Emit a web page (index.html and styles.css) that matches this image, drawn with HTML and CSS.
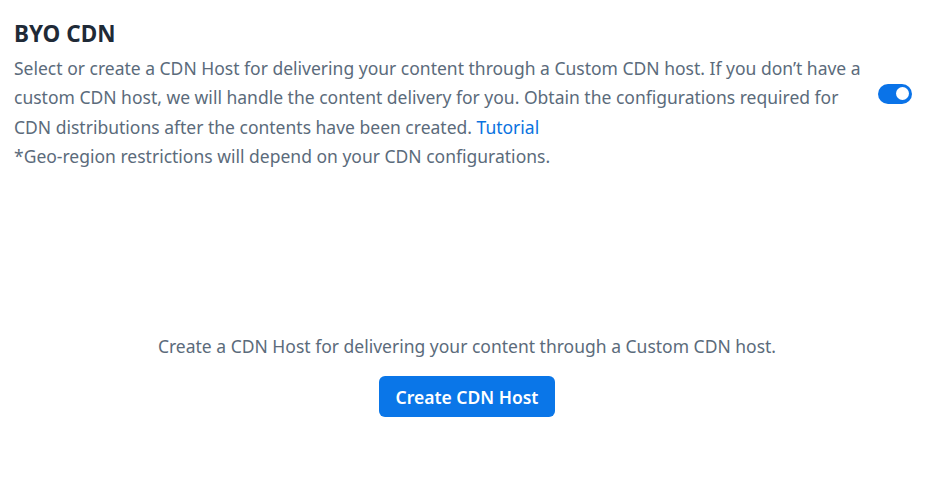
FILE: index.html
```html
<!DOCTYPE html>
<html>
<head>
<meta charset="utf-8">
<link rel="stylesheet" href="styles.css">
</head>
<body>
<div class="page">
  <section class="header">
    <div class="intro">
      <h2 class="title">BYO CDN</h2>
      <p class="desc">Select or create a CDN Host for delivering your content through a Custom CDN host. If you don’t have a custom CDN host, we will handle the content delivery for you. Obtain the configurations required for CDN distributions after the contents have been created. <a class="link" href="#">Tutorial</a></p>
      <p class="desc">*Geo-region restrictions will depend on your CDN configurations.</p>
    </div>
    <div class="toggle"><span class="knob"></span></div>
  </section>
  <section class="empty">
    <p class="empty-text">Create a CDN Host for delivering your content through a Custom CDN host.</p>
    <button class="btn">Create CDN Host</button>
  </section>
</div>
</body>
</html>
```
FILE: styles.css
```css
html, body {
  margin: 0;
  padding: 0;
  background: #ffffff;
}
body {
  font-family: "Noto Sans", "Open Sans", sans-serif;
  color: #5b6b7b;
}
.page {
  padding: 16px 28px 0 14px;
}
.header {
  display: flex;
  align-items: center;
  gap: 12px;
}
.intro {
  flex: 1;
}
.title {
  margin: 0 0 2px;
  font-size: 22.5px;
  font-weight: 700;
  color: #1f2a37;
  line-height: 36px;
}
.desc {
  margin: 0;
  font-size: 17.5px;
  line-height: 29.3px;
}
.link {
  color: #0a73e0;
  text-decoration: none;
}
.toggle {
  width: 34px;
  height: 20px;
  border-radius: 10px;
  background: #0a73e8;
  display: flex;
  align-items: center;
  justify-content: flex-end;
  padding: 0 3px;
  box-sizing: border-box;
  flex-shrink: 0;
}
.knob {
  width: 13px;
  height: 13px;
  border-radius: 50%;
  background: #fff;
}
.empty {
  display: flex;
  flex-direction: column;
  align-items: center;
  margin-top: 163px;
  margin-right: -8px;
}
.empty-text {
  margin: 0;
  font-size: 17.5px;
  line-height: 24px;
}
.btn {
  margin-top: 18px;
  font-family: inherit;
  font-size: 17.5px;
  font-weight: 600;
  color: #fff;
  background: #0a76e8;
  border: none;
  border-radius: 6px;
  height: 41px;
  padding: 0 17px;
}
```
